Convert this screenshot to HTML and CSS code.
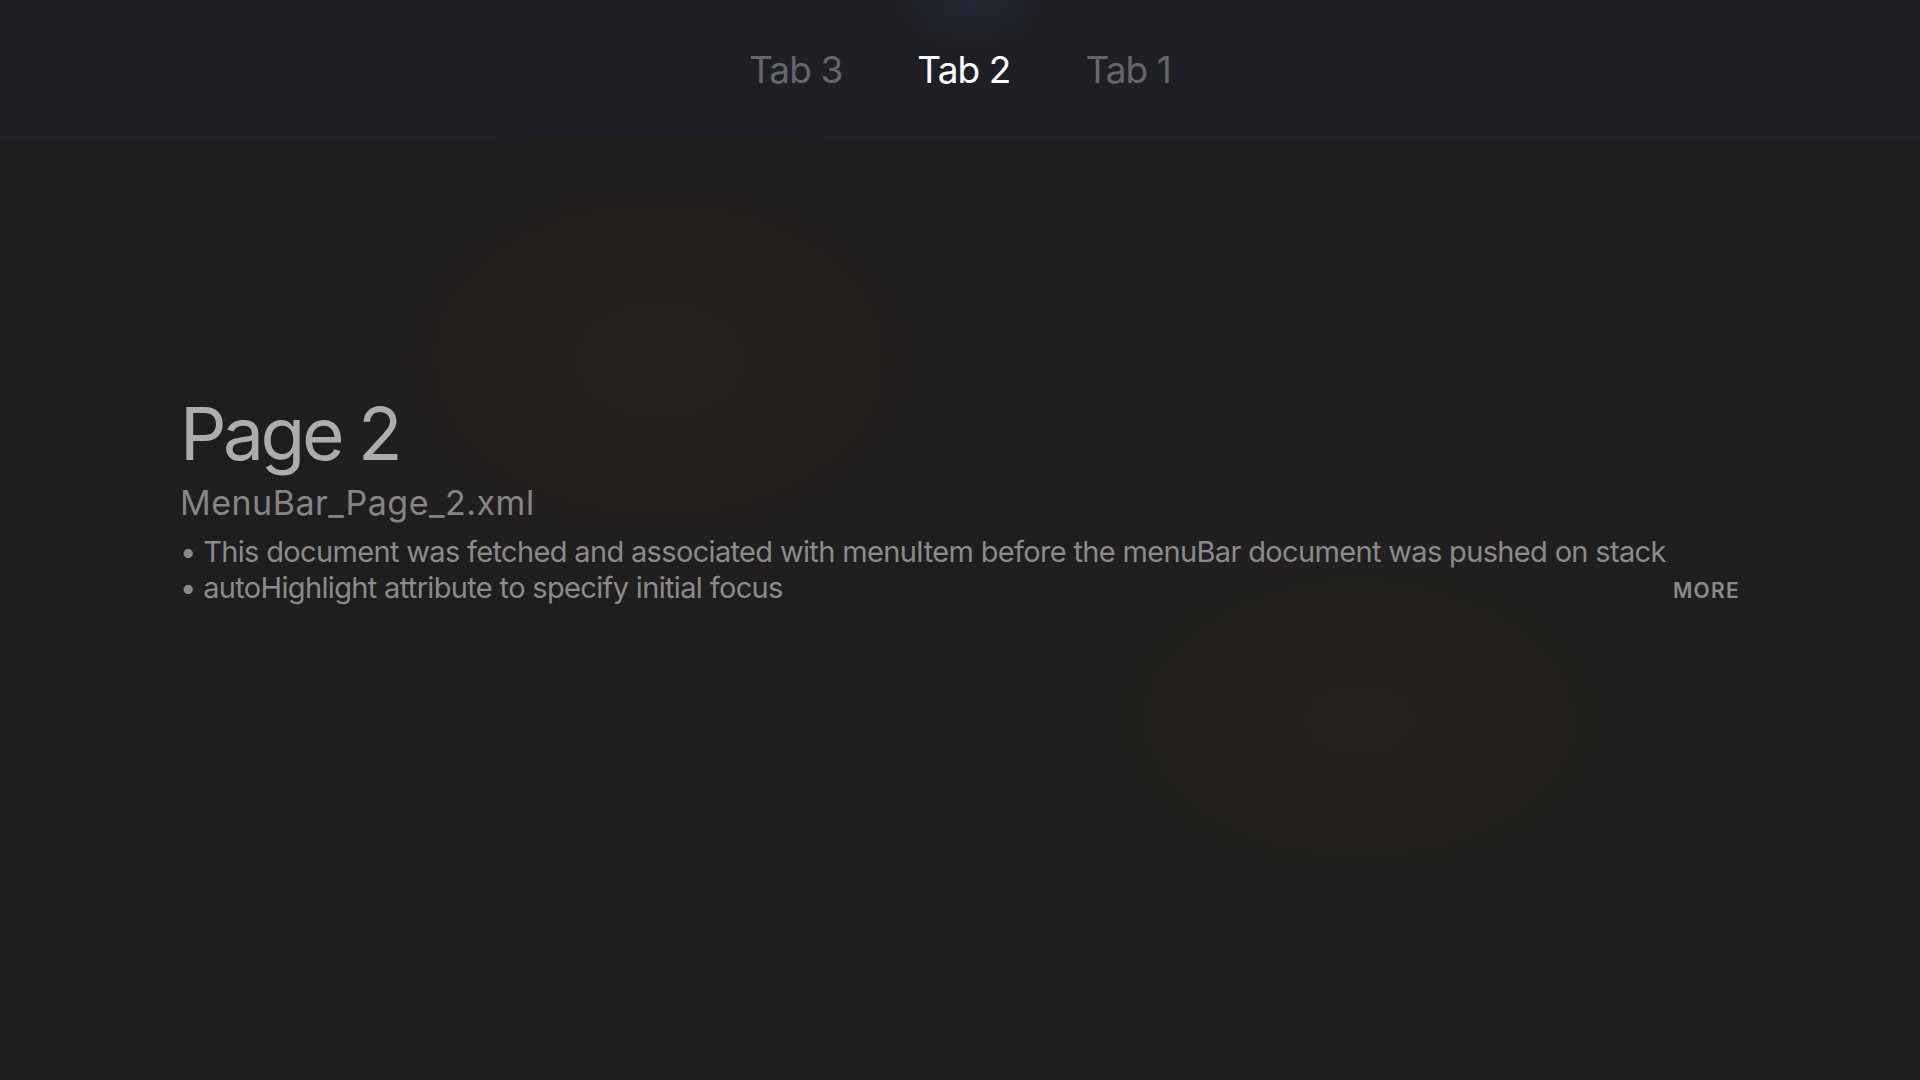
FILE: index.html
```html
<!DOCTYPE html>
<html lang="en">
<head>
<meta charset="utf-8">
<title>Page 2</title>
<link rel="stylesheet" href="styles.css">
</head>
<body>
<div class="screen">
  <header class="menubar">
    <nav class="tabs">
      <span class="tab">Tab 3</span>
      <span class="tab tab-active">Tab 2</span>
      <span class="tab">Tab 1</span>
    </nav>
  </header>
  <main class="content">
    <h1 class="title">Page 2</h1>
    <h2 class="subtitle">MenuBar_Page_2.xml</h2>
    <div class="desc-row">
      <div class="desc">
        <p class="desc-line">• This document was fetched and associated with menuItem before the menuBar document was pushed on stack</p>
        <p class="desc-line">• autoHighlight attribute to specify initial focus</p>
      </div>
      <span class="more">MORE</span>
    </div>
  </main>
</div>
</body>
</html>
```

FILE: styles.css
```css
* { box-sizing: border-box; }
html, body {
  margin: 0;
  padding: 0;
  width: 1920px;
  height: 1080px;
  overflow: hidden;
  background: #1e1e1e;
}
body {
  font-family: Inter, "Noto Sans", "Liberation Sans", sans-serif;
}
.screen {
  width: 1920px;
  height: 1080px;
  display: flex;
  flex-direction: column;
  background:
    radial-gradient(ellipse 520px 360px at 660px 360px, rgba(60, 44, 30, 0.33), rgba(60, 44, 30, 0) 70%),
    radial-gradient(ellipse 600px 380px at 1360px 720px, rgba(58, 46, 28, 0.28), rgba(58, 46, 28, 0) 70%),
    radial-gradient(ellipse 500px 300px at 1300px 400px, rgba(34, 36, 40, 0.35), rgba(34, 36, 40, 0) 70%),
    radial-gradient(ellipse 600px 300px at 700px 920px, rgba(30, 34, 38, 0.3), rgba(30, 34, 38, 0) 70%),
    #1f1e1e;
}
.menubar {
  height: 139px;
  flex: none;
  display: flex;
  align-items: center;
  justify-content: center;
  background:
    radial-gradient(ellipse 80px 50px at 970px 0px, rgba(40, 52, 78, 0.4), rgba(40, 52, 78, 0) 100%),
    #1f2025;
}
.tabs {
  display: flex;
  align-items: center;
  gap: 75px;
}
.tab {
  font-size: 37px;
  line-height: 46px;
  color: #65666a;
  font-weight: 400;
  letter-spacing: -0.9px;
}
.tab-active {
  color: #ffffff;
}
.content {
  flex: 1;
  padding: 255px 180px 0 180px;
}
.title {
  margin: 0;
  font-size: 73px;
  line-height: 80px;
  font-weight: 400;
  color: #acacac;
  letter-spacing: -3.5px;
}
.subtitle {
  margin: 9px 0 0 0;
  font-size: 34px;
  line-height: 40px;
  font-weight: 400;
  color: #858585;
  letter-spacing: 0.5px;
}
.desc-row {
  margin-top: 11px;
  display: flex;
  justify-content: space-between;
  align-items: flex-end;
}
.desc {
  flex: 1;
  min-width: 0;
}
.desc-line {
  margin: 0;
  font-size: 29px;
  line-height: 36px;
  color: #8b8b8b;
  letter-spacing: -0.66px;
  white-space: nowrap;
}
.more {
  flex: none;
  font-size: 21px;
  line-height: 30px;
  font-weight: 600;
  color: #8a8a8a;
  letter-spacing: 1.3px;
}
```
